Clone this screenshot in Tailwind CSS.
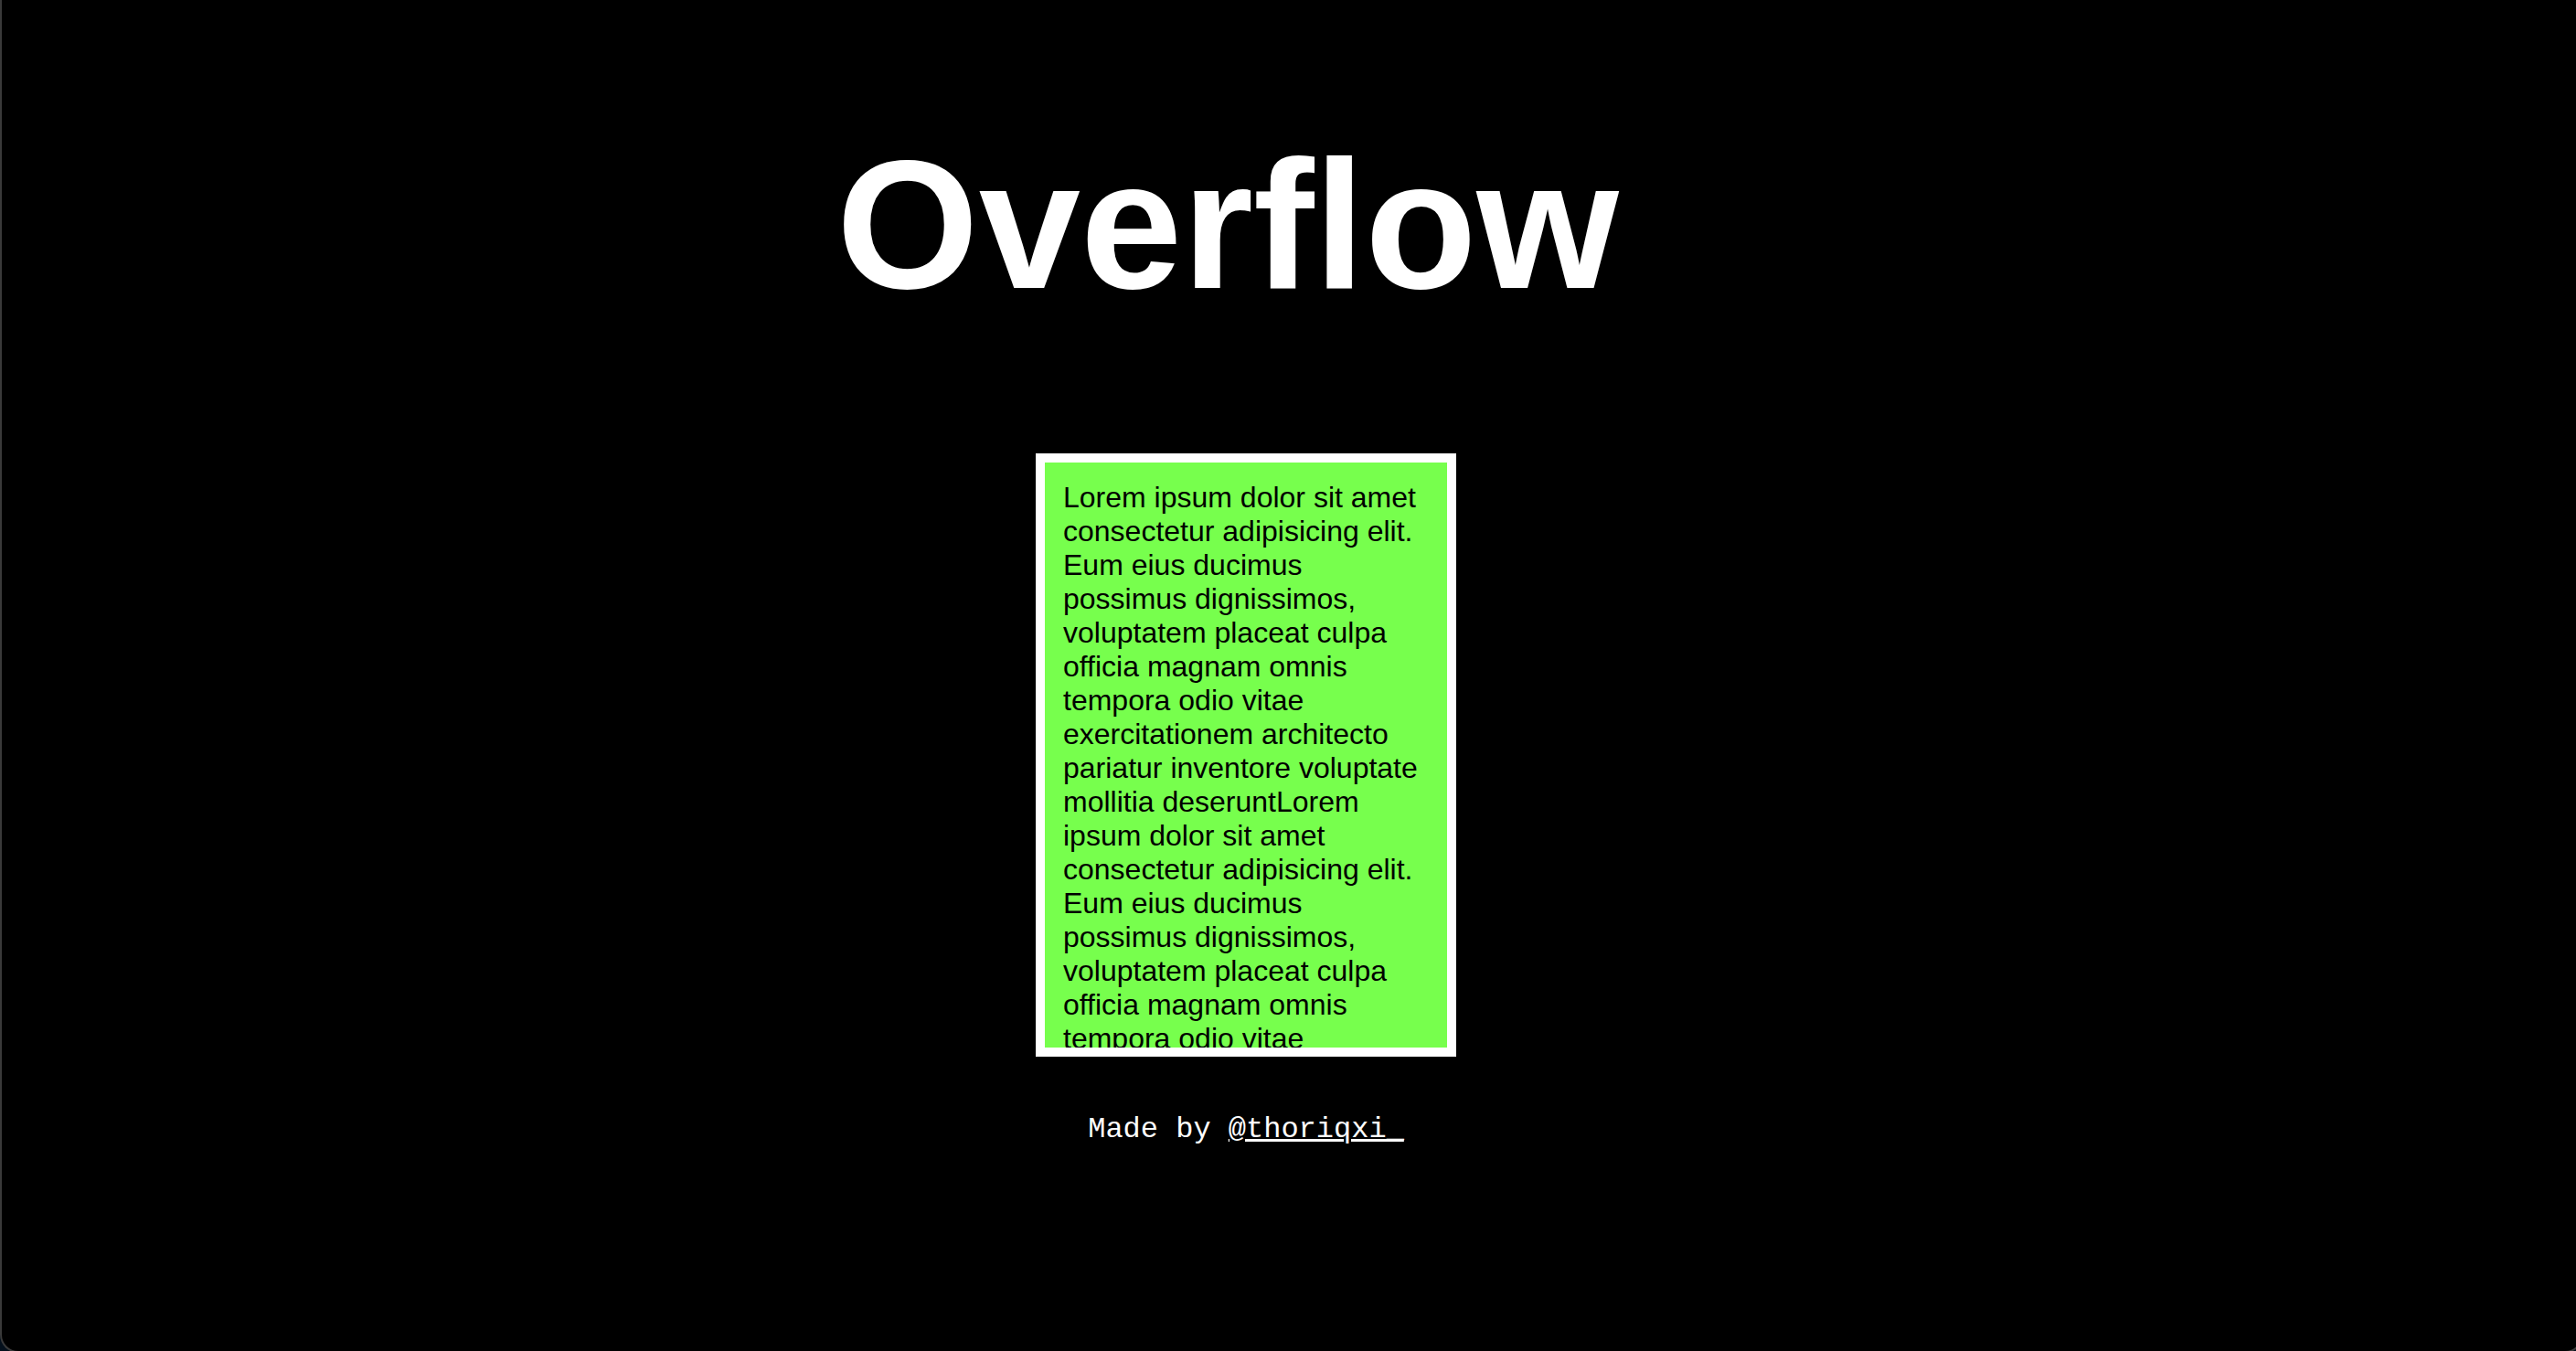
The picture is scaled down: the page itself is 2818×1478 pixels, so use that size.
<!DOCTYPE html>
<html lang="en">
<head>
<meta charset="utf-8">
<meta name="viewport" content="width=device-width, initial-scale=1">
<title>Overflow</title>
<script src="https://cdn.jsdelivr.net/npm/@tailwindcss/browser@4"></script>
</head>
<body class="flex min-h-screen overflow-x-hidden bg-[#04101c] font-['Liberation_Sans',Arial,sans-serif] text-white">
<div class="flex grow overflow-hidden">
<div class="-mr-2 -mb-0.5 flex grow flex-col items-center rounded-b-[20px] border-2 border-t-0 border-[#3a3a3a] bg-black pt-32 pr-[100px]">
<h1 class="mr-10 text-[200px] leading-[236px] font-bold">Overflow</h1>
<main class="mt-33 h-[660px] w-[460px] overflow-hidden border-10 border-white bg-[#77ff4d] p-5 text-[32px] leading-[37px] text-black">
<p>Lorem ipsum dolor sit amet consectetur adipisicing elit. Eum eius ducimus possimus dignissimos, voluptatem placeat culpa officia magnam omnis tempora odio vitae exercitationem architecto pariatur inventore voluptate mollitia deseruntLorem ipsum dolor sit amet consectetur adipisicing elit. Eum eius ducimus possimus dignissimos, voluptatem placeat culpa officia magnam omnis tempora odio vitae exercitationem architecto pariatur inventore voluptate mollitia deserunt</p>
</main>
<footer class="mt-[62px] font-['Liberation_Mono','Courier_New',monospace] text-[32px] leading-9">Made by <a href="#" class="underline decoration-3 underline-offset-2">@thoriqxi_</a></footer>
</div>
</div>
</body>
</html>
